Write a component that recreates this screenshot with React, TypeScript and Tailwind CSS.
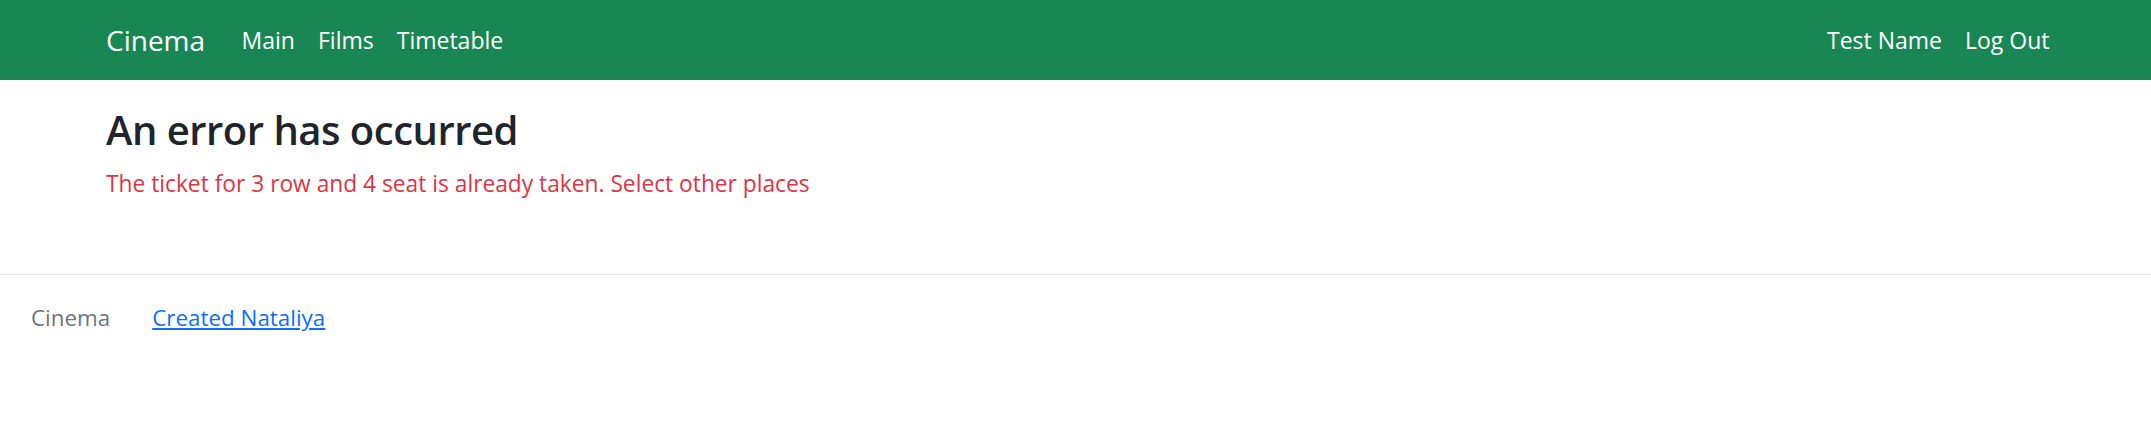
import React from "react";

// top bar links //
const leftLinks: string[] = ["Main", "Films", "Timetable"];
const rightLinks: string[] = ["Test Name", "Log Out"];

function App() {
  return (
    <div className="min-h-[445px] w-full bg-white font-['Open_Sans',sans-serif] text-[#212529]">
      {/* navbar */}
      <nav className="h-[80px] bg-[#198754] flex items-center justify-between pl-[106px] pr-[90px]">
        <div className="flex items-center">
          <a href="#" className="text-[28px] leading-[1.5] text-white mr-[25px]">Cinema</a>
          <ul className="flex items-center">
            {leftLinks.map((item) => (
              <li key={item}>
                <a href="#" className="block px-[11.5px] text-[23px] leading-[1.5] text-white">{item}</a>
              </li>
            ))}
          </ul>
        </div>
        <ul className="flex items-center">
          {rightLinks.map((item) => (
            <li key={item}>
              <a href="#" className="block px-[11.5px] text-[23px] leading-[1.5] text-white">{item}</a>
            </li>
          ))}
        </ul>
      </nav>

      {/* error body */}
      <main className="pl-[106px] pt-[26px] pb-[73px]">
        <h2 className="text-[40px] leading-[1.2] font-semibold tracking-[-0.5px] mb-[13px]">An error has occurred</h2>
        <p className="text-[22.75px] leading-[1.5] text-[#dc3545]">
          The ticket for 3 row and 4 seat is already taken. Select other places
        </p>
      </main>

      {/* footer */}
      <footer className="border-t border-[#dee2e6] pt-[26px] flex items-center pl-[31px] text-[22.4px] leading-[1.5]">
        <span className="text-[#6c757d]">Cinema</span>
        <a href="#" className="ml-[42px] text-[#0d6efd] underline">Created Nataliya</a>
      </footer>
    </div>
  );
}

export default App;
